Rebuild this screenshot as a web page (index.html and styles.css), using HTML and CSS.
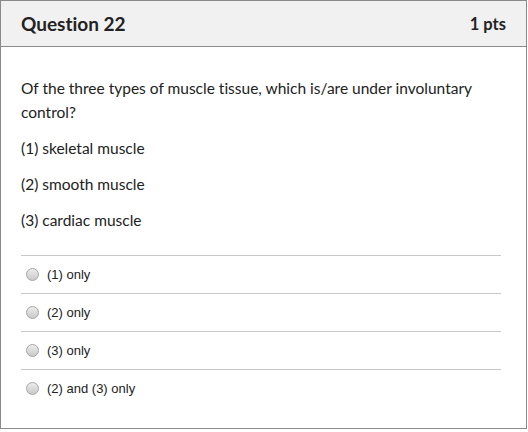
FILE: index.html
```html
<!DOCTYPE html>
<html lang="en">
<head>
<meta charset="utf-8">
<title>Question 22</title>
<link rel="stylesheet" href="styles.css">
</head>
<body>
<div class="question">
  <div class="question-header">
    <span class="question-name">Question 22</span>
    <span class="question-points">1 pts</span>
  </div>
  <div class="question-body">
    <div class="question-text">
      <p>Of the three types of muscle tissue, which is/are under involuntary control?</p>
      <p>(1) skeletal muscle</p>
      <p>(2) smooth muscle</p>
      <p>(3) cardiac muscle</p>
    </div>
    <div class="answers">
      <label class="answer"><span class="radio"></span><span class="answer-label">(1) only</span></label>
      <label class="answer"><span class="radio"></span><span class="answer-label">(2) only</span></label>
      <label class="answer"><span class="radio"></span><span class="answer-label">(3) only</span></label>
      <label class="answer"><span class="radio"></span><span class="answer-label">(2) and (3) only</span></label>
    </div>
  </div>
</div>
</body>
</html>
```

FILE: styles.css
```css
html, body {
  margin: 0;
  padding: 0;
  background: #ffffff;
}

.question {
  width: 525px;
  height: 427px;
  border: 1px solid #8a8a8a;
  font-family: Lato, "Open Sans", sans-serif;
  font-variant-ligatures: none;
  color: #222;
}

.question-header {
  height: 45px;
  background: #f1f1f1;
  border-bottom: 1px solid #8a8a8a;
  display: flex;
  align-items: center;
  justify-content: space-between;
  padding: 0 20px;
}

.question-name {
  font-size: 19px;
  font-weight: bold;
}

.question-points {
  font-size: 16.5px;
  font-weight: bold;
}

.question-body {
  padding: 29px 20px 20px 20px;
}

.question-text {
  font-size: 15.5px;
  line-height: 24px;
}

.question-text p {
  margin: 0 0 12px 0;
}

.answers {
  margin-top: 23px;
  margin-right: 5px;
}

.answer {
  display: flex;
  align-items: center;
  height: 37px;
  border-top: 1px solid #c8c8c8;
  font-family: "Liberation Sans", Arial, sans-serif;
  font-size: 13px;
}

.radio {
  width: 11px;
  height: 11px;
  margin: 0 8px 0 5px;
  border: 1px solid #a6a6a6;
  border-radius: 50%;
  background: linear-gradient(#ececec, #c9c9c9);
}
```
